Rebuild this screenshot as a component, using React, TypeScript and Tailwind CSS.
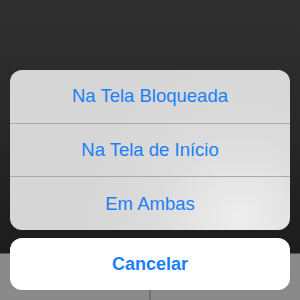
import React from "react";

export default function App() {
  const rows = ["Na Tela Bloqueada", "Na Tela de Início", "Em Ambas"];
  return (
    <div
      className="w-[300px] h-[300px] overflow-hidden flex flex-col px-[10px] pt-[70px] bg-[linear-gradient(to_bottom,#303030_0px,#262626_150px,#1c1c1c_253px,#8a8a8a_254px,#8a8a8a_300px)]"
      style={{ fontFamily: '"Liberation Sans", Arial, sans-serif' }}
    >
      <div className="h-[160px] rounded-[12px] overflow-hidden flex flex-col bg-[radial-gradient(circle_at_82%_92%,#eeeeee_0%,#dcdcdc_30%,#d6d6d6_60%)]">
        {rows.map((r, i) => (
          <div
            key={r}
            className={
              "flex-1 flex items-center justify-center text-[18.5px] text-[#1a7ff7] " +
              (i > 0 ? "border-t border-[#aaaaaa]" : "")
            }
          >
            {r}
          </div>
        ))}
      </div>
      <div className="mt-[8px] h-[52px] rounded-[12px] bg-white flex items-center justify-center text-[18px] font-bold text-[#1a7ff7]">
        Cancelar
      </div>
      <div className="h-[10px] flex justify-center">
        <div className="w-[2px] bg-[#6f6f6f]" />
      </div>
    </div>
  );
}
